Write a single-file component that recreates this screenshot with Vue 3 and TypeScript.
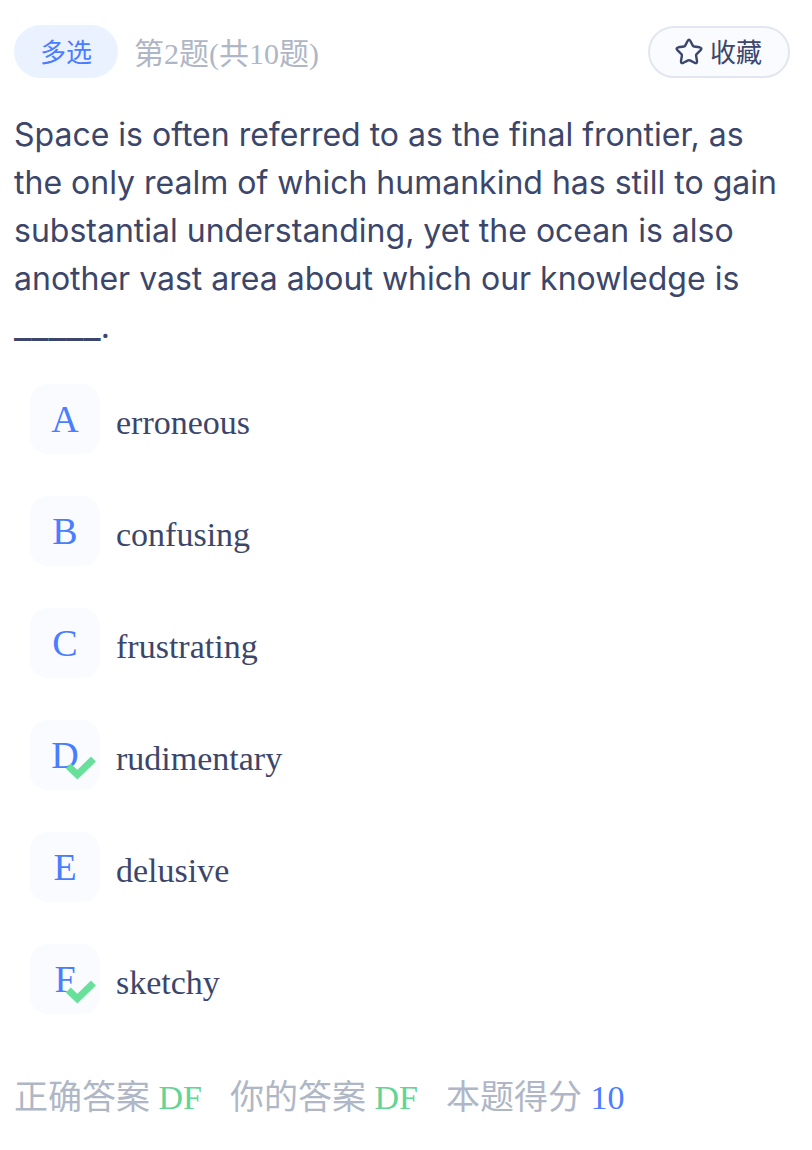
<script setup lang="ts">
import { ref } from 'vue'

interface Option {
  key: string
  text: string
}

const options: Option[] = [
  { key: 'A', text: 'erroneous' },
  { key: 'B', text: 'confusing' },
  { key: 'C', text: 'frustrating' },
  { key: 'D', text: 'rudimentary' },
  { key: 'E', text: 'delusive' },
  { key: 'F', text: 'sketchy' },
]

const selected = ref<string[]>(['D', 'F'])
const favorite = ref(false)

function toggle(key: string): void {
  selected.value = selected.value.includes(key)
    ? selected.value.filter((k) => k !== key)
    : [...selected.value, key].sort()
}
</script>

<template>
  <main class="quiz">
    <header class="top">
      <span class="kind">多选</span>
      <span class="progress">第2题(共10题)</span>
      <button class="fav" type="button" :aria-pressed="favorite" @click="favorite = !favorite">
        <svg class="star" viewBox="0 0 28 28" aria-hidden="true">
          <path
            d="M12.6 3Q14 0.6 15.4 3L17.8 7.6Q18.2 8.4 19.1 8.5L24.6 9.3Q27.6 10 25.6 12.2L21.6 16.1Q20.9 16.8 21.1 17.7L22 23Q22.2 26 19.6 24.8L14.9 22.4Q14 22 13.1 22.4L8.4 24.8Q5.8 26 6 23L6.9 17.7Q7.1 16.8 6.4 16.1L2.4 12.2Q0.4 10 3.4 9.3L8.9 8.5Q9.8 8.4 10.2 7.6Z"
          />
        </svg>
        <span class="fav-label">收藏</span>
      </button>
    </header>

    <p class="question">
      Space is often referred to as the final frontier, as the only realm of which humankind has
      still to gain substantial understanding, yet the ocean is also another vast area about which
      our knowledge is <span class="blank">_____</span>.
    </p>

    <div class="options">
      <button
        v-for="option in options"
        :key="option.key"
        class="option"
        type="button"
        :aria-pressed="selected.includes(option.key)"
        @click="toggle(option.key)"
      >
        <span class="tile">
          {{ option.key }}
          <svg v-if="selected.includes(option.key)" class="check" viewBox="0 0 30 24" aria-hidden="true">
            <path d="M2.3 10L11.4 18.7L27.4 3.1" />
          </svg>
        </span>
        <span class="text">{{ option.text }}</span>
      </button>
    </div>

    <footer class="result">
      <span>正确答案 <b class="right">DF</b></span>
      <span>你的答案 <b class="right">DF</b></span>
      <span>本题得分 <b class="score">10</b></span>
    </footer>
  </main>
</template>

<style>
body {
  margin: 0;
  background: #fff;
}
</style>

<style scoped>
.quiz {
  box-sizing: border-box;
  padding: 25px 22px 24px 14px;
  color: #3b466a;
  font-family: 'Liberation Serif', 'Noto Sans CJK SC', serif;
}

.quiz button {
  margin: 0;
  font-family: inherit;
  color: inherit;
  cursor: pointer;
}

.top {
  display: flex;
  align-items: center;
}

.kind {
  padding: 4px 26px 0;
  border-radius: 27px;
  background: #ebf2ff;
  color: #4a7dff;
  font-size: 26px;
  line-height: 49px;
}

.progress {
  margin-left: 16px;
  padding-top: 4px;
  color: #afb7c6;
  font-size: 30px;
  line-height: 49px;
}

.quiz .fav {
  display: flex;
  align-items: center;
  gap: 7px;
  margin-left: auto;
  padding: 0 26px 0 25px;
  border: 2px solid #e2e6f0;
  border-radius: 26px;
  background: #f9fbff;
  font-size: 26px;
  line-height: 44px;
}

.fav-label {
  padding-top: 4px;
}

.star {
  width: 28px;
  height: 28px;
  fill: none;
  stroke: #3b466a;
  stroke-width: 2.4;
  stroke-linejoin: round;
}

.question {
  margin: 33px 0 0;
  font-family: Inter, sans-serif;
  font-size: 32px;
  line-height: 48px;
}

.blank {
  font-size: 38px;
  line-height: 38px;
}

.options {
  display: flex;
  flex-direction: column;
  gap: 42px;
  margin: 33px 0 0 16px;
}

.quiz .option {
  display: flex;
  align-items: center;
  gap: 16px;
  padding: 0;
  border: 0;
  background: none;
  text-align: left;
}

.tile {
  position: relative;
  flex: none;
  width: 70px;
  border-radius: 18px;
  background: #f9fbff;
  color: #4a7dff;
  font-size: 38px;
  line-height: 70px;
  text-align: center;
}

.check {
  position: absolute;
  right: 4px;
  bottom: 10px;
  width: 30px;
  height: 24px;
  fill: none;
  stroke: #67e09a;
  stroke-width: 7;
}

.text {
  padding-top: 8px;
  font-size: 34px;
  line-height: 40px;
}

.result {
  display: flex;
  flex-wrap: wrap;
  gap: 28px;
  margin-top: 60px;
  color: #afb7c6;
  font-size: 34px;
  line-height: 48px;
}

.result b {
  font-weight: 400;
}

.right {
  color: #62d594;
}

.score {
  color: #4a7dff;
}
</style>
